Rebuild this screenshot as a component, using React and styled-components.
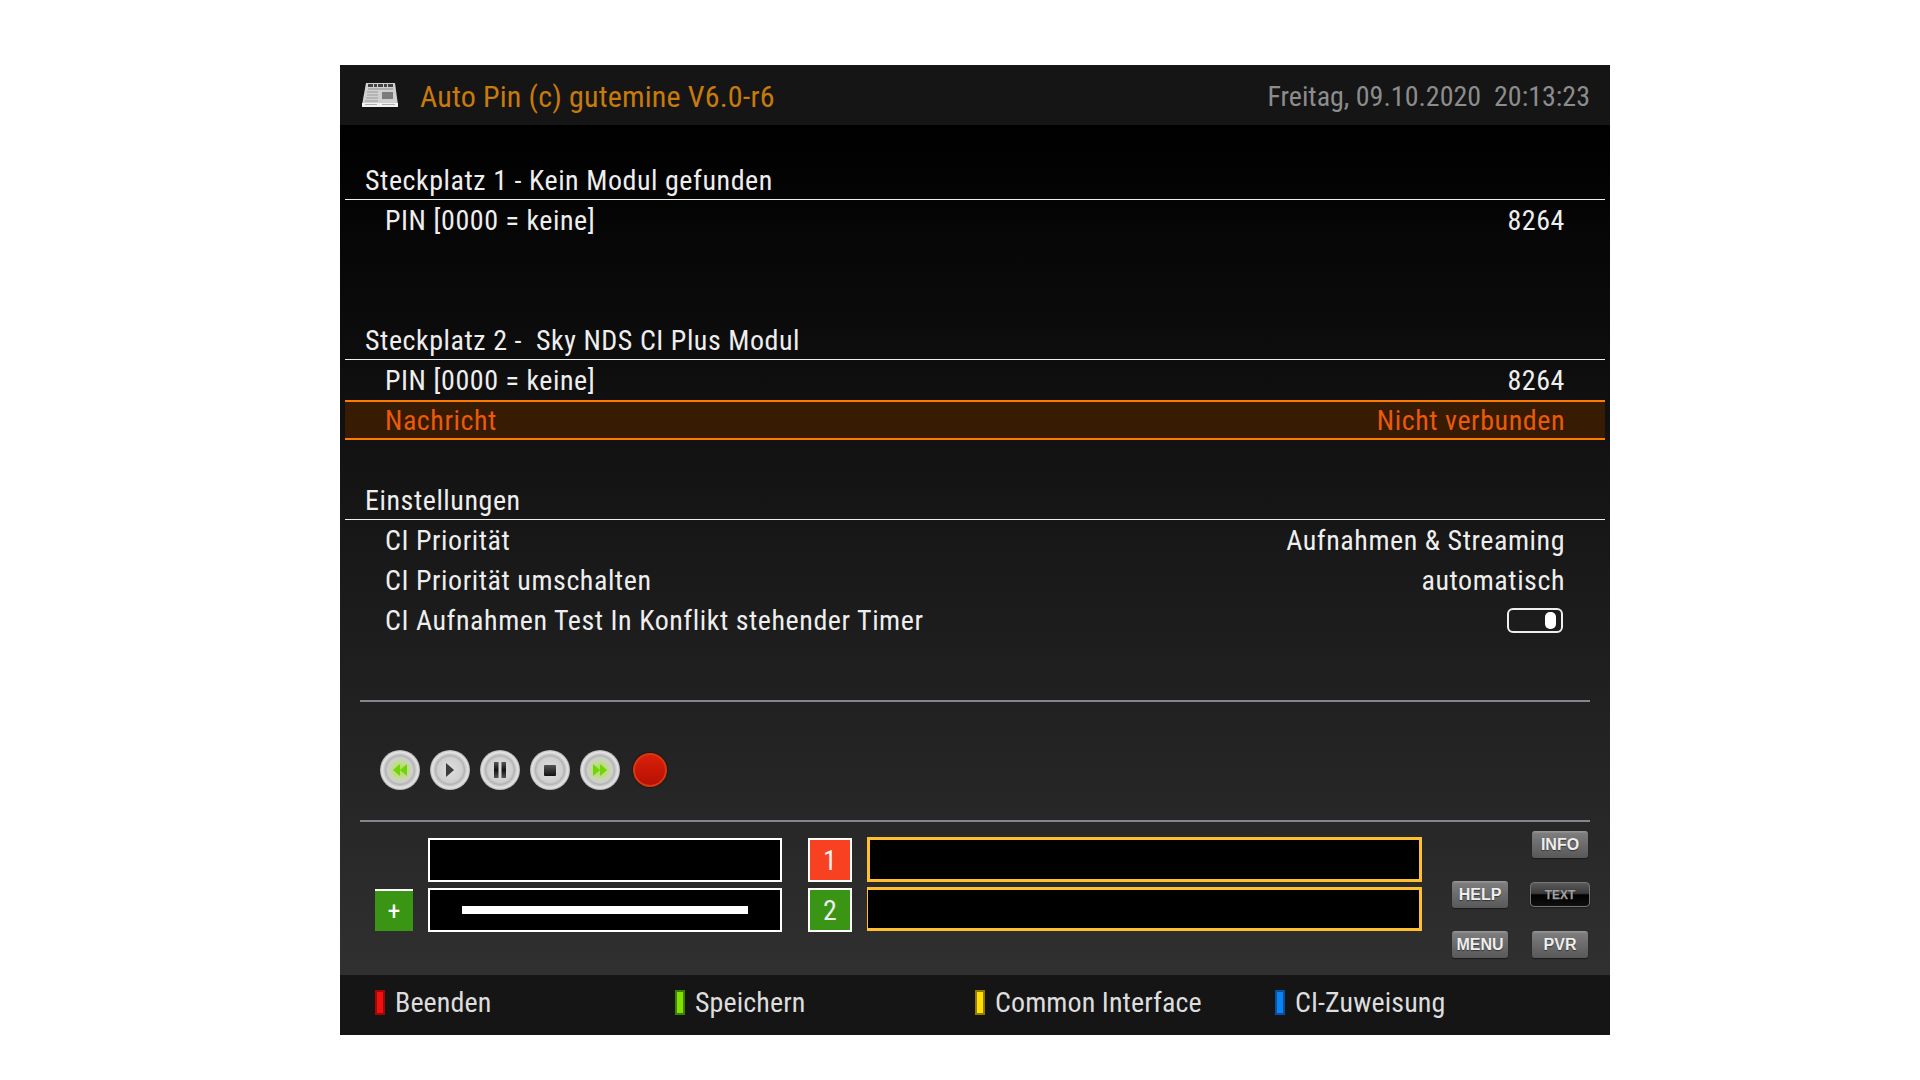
import styled, { createGlobalStyle } from "styled-components";

const GlobalStyle = createGlobalStyle`
  html, body {
    margin: 0;
    padding: 0;
    background: #fff;
  }
`;

const Screen = styled.div`
  width: 1920px;
  height: 1080px;
  padding: 65px 310px 45px 340px;
  box-sizing: border-box;
`;

const Panel = styled.div`
  width: 1270px;
  height: 970px;
  display: flex;
  flex-direction: column;
  font-family: "Roboto", sans-serif;
  font-stretch: 75%;
  font-size: 28px;
  color: #eee;
`;

const Header = styled.div`
  height: 60px;
  box-sizing: border-box;
  background: #151515;
  display: flex;
  align-items: center;
  padding: 0 20px 0 22px;
`;

const Title = styled.div`
  margin: 2px 0 0 22px;
  color: #c87a0a;
  flex: 1;
  font-size: 30px;
  letter-spacing: 0.17px;
`;

const Clock = styled.div`
  margin-top: 2px;
  color: #8c8c8c;
`;

const Body = styled.div`
  flex: 1;
  background: linear-gradient(#000, #303030);
  display: flex;
  flex-direction: column;
  padding-top: 35px;
`;

const List = styled.div`
  height: 480px;
  padding: 0 5px;
  letter-spacing: 0.55px;
`;

const Row = styled.div`
  height: 40px;
  box-sizing: border-box;
  display: flex;
  align-items: center;
  justify-content: space-between;
  padding: 2px 40px 0 40px;
  line-height: 38px;
`;

const SectionRow = styled(Row)`
  padding-left: 20px;
  border-bottom: 1px solid #eee;
`;

const SelectedRow = styled(Row)`
  color: #ea5a0a;
  background: #371b02;
  border-top: 2px solid #ff7a00;
  border-bottom: 2px solid #ff7a00;
`;

const Toggle = styled.div`
  width: 56px;
  height: 25px;
  margin: -2px 2px 0 0;
  box-sizing: border-box;
  border: 2px solid #eee;
  border-radius: 6px;
  display: flex;
  justify-content: flex-end;
  align-items: center;
  padding-right: 5px;
`;

const Knob = styled.div`
  width: 11px;
  height: 17px;
  background: #fff;
  border-radius: 5px;
`;

const Separator = styled.div`
  height: 2px;
  margin: ${(p) => p.$top || 0}px 20px 0;
  background: #858590;
`;

const Transport = styled.div`
  height: 118px;
  box-sizing: border-box;
  padding: 18px 0 0 40px;
  display: flex;
  align-items: center;
  gap: 10px;
`;

const RoundButton = styled.div`
  width: 40px;
  height: 40px;
  border-radius: 50%;
  background: radial-gradient(
    closest-side,
    ${(p) => (p.$glow ? "#a8e24a" : "#dcdcdc")} 0,
    ${(p) => (p.$glow ? "#c0dc8c" : "#d6d6d6")} 35%,
    #cfcfcf 62%,
    #b4b4b4 72%,
    #cdcdcd 80%,
    #e6e6e6 90%,
    #b0b0b0 100%
  );
  display: flex;
  align-items: center;
  justify-content: center;
`;

const RecordButton = styled.div`
  width: 34px;
  height: 34px;
  margin-left: 3px;
  box-sizing: border-box;
  border-radius: 50%;
  border: 2px solid #d8380c;
  background: linear-gradient(#d8200a, #b81004);
  box-shadow: 0 0 2px #000;
`;

const Status = styled.div`
  flex: 1;
  display: grid;
  grid-template-columns: 38px 354px 55px 555px 1fr;
  column-gap: 15px;
  align-items: start;
  padding: 15px 0 0 35px;
`;

const BoxColumn = styled.div`
  height: 94px;
  padding-top: 1px;
  display: flex;
  flex-direction: column;
  gap: 6px;
`;

const PlusColumn = styled(BoxColumn)`
  justify-content: flex-end;
  padding-bottom: 2px;
  height: 93px;
`;

const TunerColumn = styled(BoxColumn)`
  margin-left: 11px;
`;

const SignalColumn = styled(BoxColumn)`
  padding-top: 0;
  gap: 5px;
`;

const PlusBox = styled.div`
  height: 42px;
  box-sizing: border-box;
  background: #3a9514;
  border-top: 2px solid #fff;
  color: #fff;
  font-size: 26px;
  display: flex;
  align-items: center;
  justify-content: center;
`;

const InfoBox = styled.div`
  height: 44px;
  box-sizing: border-box;
  background: #000;
  border: 2px solid #fff;
  display: flex;
  align-items: center;
  padding: 0 32px;
`;

const Progress = styled.div`
  width: 100%;
  height: 8px;
  background: #fff;
`;

const TunerBox = styled.div`
  height: 44px;
  box-sizing: border-box;
  background: ${(p) => p.$color};
  border: 2px solid #fff;
  color: #eee;
  font-size: 28px;
  display: flex;
  align-items: center;
  justify-content: center;
`;

const SignalBox = styled.div`
  height: 45px;
  box-sizing: border-box;
  background: #000;
  border: 3px solid #ffc030;
  border-left-width: ${(p) => p.$left}px;
`;

const RemoteGrid = styled.div`
  display: grid;
  grid-template-columns: 56px 56px;
  grid-auto-rows: 27px;
  column-gap: 24px;
  row-gap: 23px;
  margin: -6px 0 0 15px;
`;

const RemoteKey = styled.div`
  grid-column: ${(p) => p.$col};
  padding-top: 1px;
  border-radius: 3px;
  background: linear-gradient(#9a9a9a 0, #7c7c7c 10%, #585858 100%);
  box-shadow: 0 1px 1px #1a1a1a;
  color: #eee;
  font-family: "Liberation Sans", sans-serif;
  font-stretch: normal;
  font-size: 16px;
  font-weight: 700;
  text-shadow: 0 1px 1px #333;
  display: flex;
  align-items: center;
  justify-content: center;
`;

const TextKey = styled(RemoteKey)`
  margin: 1px -2px;
  border: 1px solid #777;
  border-radius: 4px;
  background: linear-gradient(#5a5a5a 0, #3a3a3a 45%, #000 52%, #101010 100%);
  color: #a0a0a0;
  font-size: 12px;
`;

const Footer = styled.div`
  height: 60px;
  box-sizing: border-box;
  background: #151515;
  display: grid;
  grid-template-columns: repeat(4, 300px);
  padding: 0 0 5px 35px;
  align-items: center;
  color: #ddd;
  letter-spacing: 0.1px;
`;

const Legend = styled.div`
  display: flex;
  align-items: center;
  gap: 10px;
`;

const ColorKey = styled.div`
  width: 10px;
  height: 25px;
  box-sizing: border-box;
  border: 2px solid ${(p) => p.$edge};
  background: ${(p) => p.$color};
`;

function NewspaperIcon() {
  return (
    <svg width="36" height="24" viewBox="0 0 36 24">
      <path d="M4 0H33L36 22V24H0V22Z" fill="#d0d0d0" />
      <path d="M6 2.5H31" stroke="#444" strokeWidth="3" strokeDasharray="5 1 3 1" />
      <path d="M6 6H31" stroke="#8c8c8c" strokeWidth="1" />
      <path d="M5 9H16M5 12H16M4 15H16M3 18H16" stroke="#9a9a9a" strokeWidth="1" />
      <path d="M20 9H31V16H20Z" fill="#7c7c7c" />
      <path d="M0 20H36V24H0Z" fill="#f2f2f2" />
      <path d="M3 21.5H15M20 21.5H33" stroke="#b0b0b0" strokeWidth="1" />
    </svg>
  );
}

function TransportIcon({ kind }) {
  if (kind === "rew" || kind === "ff") {
    const d = kind === "rew" ? "M1 6L8 0V12ZM8 6L15 0V12Z" : "M15 6L8 0V12ZM8 6L1 0V12Z";
    return (
      <svg width="16" height="12" viewBox="0 0 16 12">
        <path d={d} fill="#6fd408" />
      </svg>
    );
  }
  if (kind === "play") {
    return (
      <svg width="8" height="14" viewBox="0 0 8 14">
        <path d="M0 0L8 7L0 14Z" fill="#3c3c3c" />
      </svg>
    );
  }
  if (kind === "pause") {
    return (
      <svg width="12" height="16" viewBox="0 0 12 16">
        <defs>
          <linearGradient id="pauseBar" x1="0" y1="0" x2="0" y2="1">
            <stop offset="0" stopColor="#555" />
            <stop offset="0.5" stopColor="#111" />
            <stop offset="1" stopColor="#555" />
          </linearGradient>
        </defs>
        <path d="M0 0H4.5V16H0ZM7.5 0H12V16H7.5Z" fill="url(#pauseBar)" />
      </svg>
    );
  }
  return (
    <svg width="12" height="11" viewBox="0 0 12 11">
      <defs>
        <linearGradient id="stopFace" x1="0" y1="0" x2="0" y2="1">
          <stop offset="0" stopColor="#555" />
          <stop offset="1" stopColor="#111" />
        </linearGradient>
      </defs>
      <rect width="12" height="11" rx="1" fill="url(#stopFace)" />
    </svg>
  );
}

export default function App() {
  return (
    <Screen>
      <GlobalStyle />
      <Panel>
        <Header>
          <NewspaperIcon />
          <Title>Auto Pin (c) gutemine V6.0-r6</Title>
          <Clock>Freitag, 09.10.2020&nbsp; 20:13:23</Clock>
        </Header>
        <Body>
          <List>
            <SectionRow>Steckplatz 1 - Kein Modul gefunden</SectionRow>
            <Row>
              <span>PIN [0000 = keine]</span>
              <span>8264</span>
            </Row>
            <Row />
            <Row />
            <SectionRow>Steckplatz 2 -&nbsp; Sky NDS CI Plus Modul</SectionRow>
            <Row>
              <span>PIN [0000 = keine]</span>
              <span>8264</span>
            </Row>
            <SelectedRow>
              <span>Nachricht</span>
              <span>Nicht verbunden</span>
            </SelectedRow>
            <Row />
            <SectionRow>Einstellungen</SectionRow>
            <Row>
              <span>CI Priorität</span>
              <span>Aufnahmen &amp; Streaming</span>
            </Row>
            <Row>
              <span>CI Priorität umschalten</span>
              <span>automatisch</span>
            </Row>
            <Row>
              <span>CI Aufnahmen Test In Konflikt stehender Timer</span>
              <Toggle>
                <Knob />
              </Toggle>
            </Row>
          </List>
          <Separator $top={60} />
          <Transport>
            <RoundButton $glow><TransportIcon kind="rew" /></RoundButton>
            <RoundButton><TransportIcon kind="play" /></RoundButton>
            <RoundButton><TransportIcon kind="pause" /></RoundButton>
            <RoundButton><TransportIcon kind="stop" /></RoundButton>
            <RoundButton $glow><TransportIcon kind="ff" /></RoundButton>
            <RecordButton />
          </Transport>
          <Separator />
          <Status>
            <PlusColumn>
              <PlusBox>+</PlusBox>
            </PlusColumn>
            <BoxColumn>
              <InfoBox />
              <InfoBox>
                <Progress />
              </InfoBox>
            </BoxColumn>
            <TunerColumn>
              <TunerBox $color="#f74120">1</TunerBox>
              <TunerBox $color="#3a9514">2</TunerBox>
            </TunerColumn>
            <SignalColumn>
              <SignalBox $left={3} />
              <SignalBox $left={1} />
            </SignalColumn>
            <RemoteGrid>
              <RemoteKey $col={2}>INFO</RemoteKey>
              <RemoteKey $col={1}>HELP</RemoteKey>
              <TextKey $col={2}>TEXT</TextKey>
              <RemoteKey $col={1}>MENU</RemoteKey>
              <RemoteKey $col={2}>PVR</RemoteKey>
            </RemoteGrid>
          </Status>
        </Body>
        <Footer>
          <Legend><ColorKey $color="#f01010" $edge="#a00808" />Beenden</Legend>
          <Legend><ColorKey $color="#80e000" $edge="#3f7f00" />Speichern</Legend>
          <Legend><ColorKey $color="#ffe000" $edge="#8f7a00" />Common Interface</Legend>
          <Legend><ColorKey $color="#0a84f0" $edge="#0a4ea0" />CI-Zuweisung</Legend>
        </Footer>
      </Panel>
    </Screen>
  );
}
